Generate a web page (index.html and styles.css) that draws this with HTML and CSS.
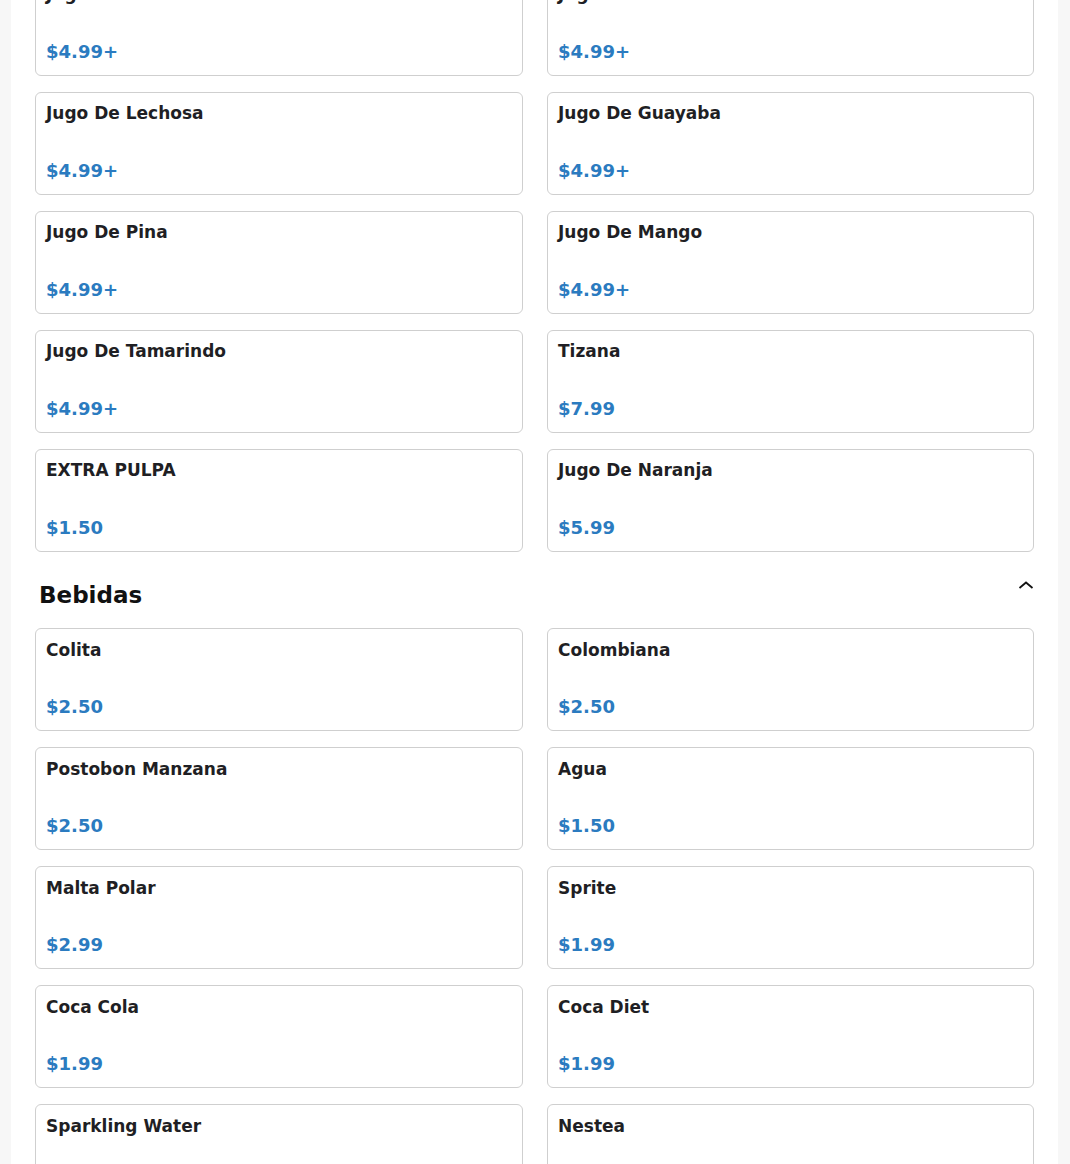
FILE: index.html
```html
<!DOCTYPE html>
<html lang="es">
<head>
<meta charset="utf-8">
<title>Menu</title>
<link rel="stylesheet" href="styles.css">
</head>
<body>
<main class="panel">
  <section class="section section-first">
    <div class="grid">
      <div class="card"><div class="name">Jugo De Mora</div><div class="price">$4.99+</div></div>
      <div class="card"><div class="name">Jugo De Fresa</div><div class="price">$4.99+</div></div>
      <div class="card"><div class="name">Jugo De Lechosa</div><div class="price">$4.99+</div></div>
      <div class="card"><div class="name">Jugo De Guayaba</div><div class="price">$4.99+</div></div>
      <div class="card"><div class="name">Jugo De Pina</div><div class="price">$4.99+</div></div>
      <div class="card"><div class="name">Jugo De Mango</div><div class="price">$4.99+</div></div>
      <div class="card"><div class="name">Jugo De Tamarindo</div><div class="price">$4.99+</div></div>
      <div class="card"><div class="name">Tizana</div><div class="price">$7.99</div></div>
      <div class="card"><div class="name">EXTRA PULPA</div><div class="price">$1.50</div></div>
      <div class="card"><div class="name">Jugo De Naranja</div><div class="price">$5.99</div></div>
    </div>
  </section>
  <section class="section">
    <header class="section-head">
      <h2 class="section-title">Bebidas</h2>
      <svg class="chevron" width="16" height="10" viewBox="0 0 16 10" aria-hidden="true"><path d="M1.5 8 L8 2.5 L14.5 8" fill="none" stroke="#111" stroke-width="1.8"/></svg>
    </header>
    <div class="grid">
      <div class="card"><div class="name">Colita</div><div class="price">$2.50</div></div>
      <div class="card"><div class="name">Colombiana</div><div class="price">$2.50</div></div>
      <div class="card"><div class="name">Postobon Manzana</div><div class="price">$2.50</div></div>
      <div class="card"><div class="name">Agua</div><div class="price">$1.50</div></div>
      <div class="card"><div class="name">Malta Polar</div><div class="price">$2.99</div></div>
      <div class="card"><div class="name">Sprite</div><div class="price">$1.99</div></div>
      <div class="card"><div class="name">Coca Cola</div><div class="price">$1.99</div></div>
      <div class="card"><div class="name">Coca Diet</div><div class="price">$1.99</div></div>
      <div class="card"><div class="name">Sparkling Water</div><div class="price">$1.99</div></div>
      <div class="card"><div class="name">Nestea</div><div class="price">$1.99</div></div>
    </div>
  </section>
</main>
</body>
</html>
```
FILE: styles.css
```css
html, body {
  margin: 0;
  padding: 0;
}
body {
  background: #f7f7f7;
  font-family: "DejaVu Sans", sans-serif;
  color: #222;
}
.panel {
  margin-left: 11px;
  width: 1047px;
  background: #fff;
  padding: 0 24px 40px 24px;
  box-sizing: border-box;
}
.section-first {
  margin-top: -27px;
}
.grid {
  display: grid;
  grid-template-columns: 488px 487px;
  column-gap: 24px;
  row-gap: 16px;
}
.card {
  height: 103px;
  box-sizing: border-box;
  border: 1px solid #cfcfcf;
  border-radius: 6px;
  padding: 9px 10px 11px;
  display: flex;
  flex-direction: column;
  justify-content: space-between;
}
.section-first .card .name {
  margin-top: -1px;
}
.name {
  font-size: 17px;
  font-weight: bold;
  line-height: 24px;
  color: #1f1f24;
}
.price {
  font-size: 18px;
  font-weight: bold;
  line-height: 24px;
  color: #2b7bc0;
}
.section-head {
  display: flex;
  justify-content: space-between;
  align-items: flex-start;
  padding: 29px 0 19px 4px;
}
.section-title {
  margin: 0;
  font-size: 23px;
  line-height: 28px;
  font-weight: bold;
  color: #111;
}
.chevron {
  margin-top: -1px;
}
```
